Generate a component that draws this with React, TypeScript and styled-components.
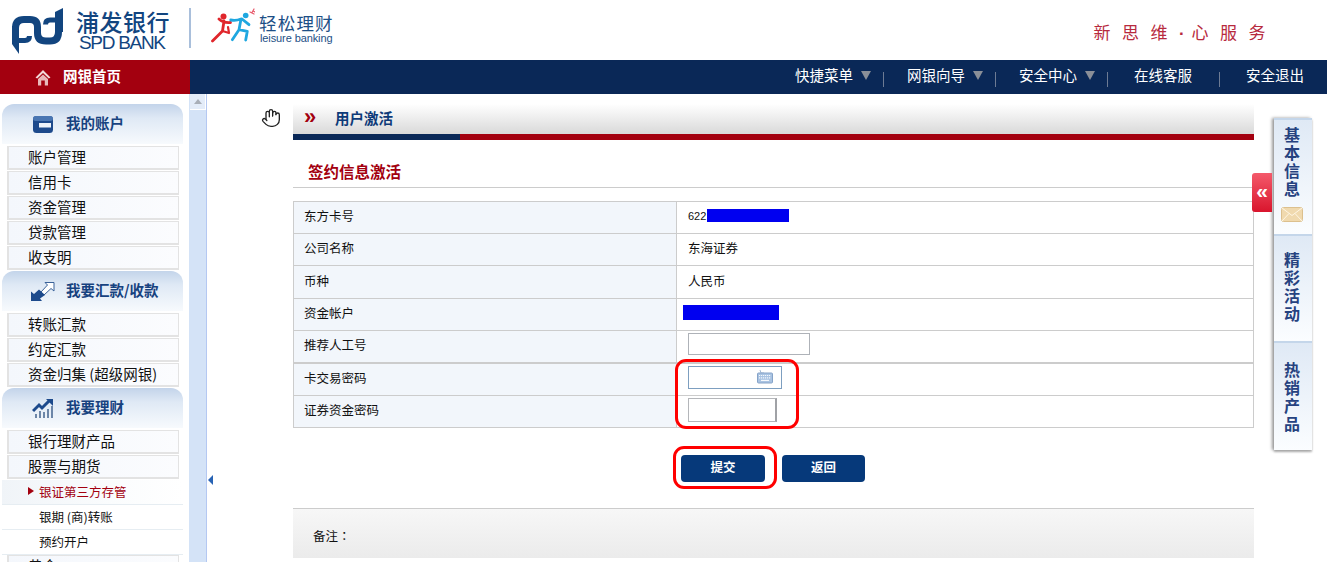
import React from 'react';
import styled, { createGlobalStyle } from 'styled-components';
import { Hand } from 'lucide-react';

const FONT = '"Noto Sans CJK SC", "Liberation Sans", sans-serif';

const GlobalStyle = createGlobalStyle`
  html, body {
    margin: 0;
    padding: 0;
    height: 562px;
    overflow: hidden;
    background: #fff;
    font-family: ${FONT};
  }
  * { box-sizing: border-box; }
`;

const Page = styled.div`
  width: 1327px;
  height: 562px;
  overflow: hidden;
  display: flex;
  flex-direction: column;
`;

/* top banner */
const Banner = styled.header`
  height: 60px;
  flex: none;
  display: flex;
  align-items: flex-start;
  padding: 8px 61px 0 11px;
`;

const BankName = styled.div`
  margin-left: 13px;
  width: 100px;
  display: flex;
  flex-direction: column;
  color: #12457f;
`;

const BankCn = styled.div`
  font-size: 23px;
  line-height: 26px;
  font-weight: 500;
  letter-spacing: 0.5px;
`;

const BankEn = styled.div`
  font-family: "Liberation Sans", sans-serif;
  font-size: 19px;
  line-height: 17px;
  letter-spacing: -1.3px;
  margin-left: 3px;
`;

const Divider = styled.div`
  width: 2px;
  height: 40px;
  margin: 0 20px 0 13px;
  background: #a9bfdb;
`;

const Leisure = styled.div`
  margin: 5px 0 0 4px;
  display: flex;
  flex-direction: column;
  color: #1d4f86;
`;

const LeisureCn = styled.div`
  font-size: 17.5px;
  line-height: 20px;
  letter-spacing: 1.2px;
`;

const LeisureEn = styled.div`
  font-family: "Liberation Sans", sans-serif;
  font-size: 11px;
  line-height: 11px;
  margin-left: 1px;
  letter-spacing: -0.1px;
`;

const Slogan = styled.div`
  margin: 12px -11px 0 auto;
  font-size: 17px;
  line-height: 24px;
  letter-spacing: 11.5px;
  color: #b72a3e;
  white-space: nowrap;
`;

const SloganDot = styled.span`
  font-family: "Liberation Sans", sans-serif;
  font-weight: 700;
  letter-spacing: 6.8px;
`;

/* nav bar */
const NavBar = styled.nav`
  height: 34px;
  flex: none;
  display: flex;
  background: #0a2857;
`;

const HomeTab = styled.div`
  width: 190px;
  background: #a3000f;
  display: flex;
  align-items: center;
  padding-left: 35px;
  gap: 12px;
  color: #fff;
  font-size: 14.5px;
  font-weight: 700;
`;

const HomeLabel = styled.span`
  padding-bottom: 4px;
`;

const NavLinks = styled.div`
  flex: 1;
  display: flex;
  align-items: center;
  justify-content: flex-end;
  padding-right: 23px;
`;

const NavLink = styled.span`
  color: #fff;
  font-size: 14.5px;
  line-height: 30px;
  padding-bottom: 4px;
  white-space: nowrap;
`;

const NavArrow = styled.span`
  width: 0;
  height: 0;
  margin: 0 12px 4px 8px;
  border-left: 5px solid transparent;
  border-right: 5px solid transparent;
  border-top: 9px solid #8a8f98;
`;

const NavSep = styled.span<{ $gap: number; $after: number }>`
  width: 1px;
  height: 15px;
  margin: 4px ${({ $after }) => $after}px 0 ${({ $gap }) => $gap}px;
  background: #6d7b94;
`;

/* body */
const Body = styled.div`
  flex: 1;
  display: flex;
  min-height: 0;
`;

const Sidebar = styled.aside`
  width: 189px;
  flex: none;
  padding: 10px 0 0 2px;
  overflow: hidden;
`;

const GroupHead = styled.div`
  width: 181px;
  height: 40px;
  margin-bottom: 2px;
  border-radius: 12px 12px 0 0;
  background: linear-gradient(#c3d4ea 0%, #dfe9f5 35%, #f7fafd 100%);
  display: flex;
  align-items: center;
  color: #17427f;
  font-size: 14.5px;
  font-weight: 700;
  white-space: nowrap;
`;

const GroupIcon = styled.span`
  width: 64px;
  flex: none;
  display: flex;
  justify-content: center;
  padding-left: 18px;
`;

const GroupLabel = styled.span`
  padding-bottom: 4px;
`;

const MenuItem = styled.div`
  width: 172px;
  height: 24px;
  margin: 0 0 1px 5px;
  padding-left: 19px;
  border: 1px solid #e3e3e3;
  border-width: 1px 1px 2px 2px;
  background: linear-gradient(90deg, #f4f7fc, #fbfcfe);
  color: #111;
  font-size: 14.5px;
  line-height: 20px;
  white-space: nowrap;
`;

const SubItem = styled.div<{ $active?: boolean }>`
  width: 181px;
  height: 25px;
  padding: 0 0 2px ${({ $active }) => ($active ? 26 : 37)}px;
  display: flex;
  align-items: center;
  gap: 5px;
  border-bottom: 1px solid #e6edf2;
  background: ${({ $active }) =>
    $active ? 'linear-gradient(90deg, #f0f4f8, #fafcfd 60%, #fff)' : '#fff'};
  color: ${({ $active }) => ($active ? '#a3000f' : '#111')};
  font-size: 12.5px;
  white-space: nowrap;
`;

const ActiveMark = styled.span`
  width: 0;
  height: 0;
  border-top: 4px solid transparent;
  border-bottom: 4px solid transparent;
  border-left: 6px solid #a3000f;
`;

const Strip = styled.div`
  position: relative;
  width: 18px;
  flex: none;
  background: #d4e3f7;
  border-right: 1px solid #b4c8f2;
  border-left: 1px solid #d4e3f7;
`;

const ScrollUp = styled.div`
  height: 16px;
  background: #e3ecf9;
  border-bottom: 1px solid #fff;
  border-right: 1px solid #fff;
  display: flex;
  align-items: center;
  justify-content: center;
  &::after {
    content: '';
    border-left: 4px solid transparent;
    border-right: 4px solid transparent;
    border-bottom: 5px solid #a9afb8;
  }
`;

const CollapseMark = styled.span`
  position: absolute;
  left: 18px;
  top: 381px;
  border-top: 5px solid transparent;
  border-bottom: 5px solid transparent;
  border-right: 5px solid #2863b4;
`;

const HandCol = styled.div`
  width: 86px;
  flex: none;
  padding: 14px 0 0 54px;
`;

const Content = styled.main`
  position: relative;
  width: 961px;
  flex: none;
  padding-top: 10px;
`;

const TitleBar = styled.div`
  height: 30px;
  padding: 0 0 4px 11px;
  display: flex;
  align-items: center;
  background: linear-gradient(#fff, #d9d9d9);
  color: #0d3a78;
  font-size: 14.5px;
  font-weight: 700;
`;

const Chevrons = styled.span`
  width: 31px;
  color: #a3000f;
  font-family: "Liberation Sans", sans-serif;
  font-size: 22px;
  font-weight: 700;
  line-height: 20px;
`;

const TitleRule = styled.div`
  height: 6px;
  background: linear-gradient(90deg, #0a2857 167px, #a3000f 167px);
`;

const SectionTitle = styled.h2`
  height: 48px;
  margin: 0 0 13px;
  padding: 19px 0 0 15px;
  border-bottom: 1px solid #ccc;
  color: #a3000f;
  font-size: 15.5px;
  line-height: 24px;
  font-weight: 700;
`;

const InfoTable = styled.table`
  width: 100%;
  border-collapse: collapse;
  border: 1px solid #ccc;
  font-size: 12.5px;
  color: #111;
`;

const Row = styled.tr<{ $height: number; $heavy?: boolean }>`
  height: ${({ $height }) => $height}px;
  border-bottom: ${({ $heavy }) => ($heavy ? 2 : 1)}px solid #ccc;
`;

const Label = styled.td`
  width: 383px;
  padding: 0 0 4px 10px;
  background: #f2f6fb;
  border-right: 1px solid #ccc;
`;

const Value = styled.td`
  padding: 0 0 4px 11px;
`;

const CellLine = styled.div`
  display: flex;
  align-items: center;
`;

const CardNo = styled.span`
  font-family: "Liberation Sans", sans-serif;
  font-size: 11px;
`;

const Redact = styled.span<{ $width: number; $height: number; $shift?: number }>`
  display: inline-block;
  width: ${({ $width }) => $width}px;
  height: ${({ $height }) => $height}px;
  margin-left: ${({ $shift }) => $shift ?? 0}px;
  background: #0000f0;
`;

const TextBox = styled.div<{ $width: number; $height: number }>`
  width: ${({ $width }) => $width}px;
  height: ${({ $height }) => $height}px;
  border: 1px solid #aeb2b8;
`;

const KeyBox = styled.div`
  width: 94px;
  height: 23px;
  border: 1px solid #7d9fc0;
  display: flex;
  align-items: center;
  justify-content: flex-end;
  padding-right: 8px;
`;

const SecretBox = styled.div`
  width: 89px;
  height: 24px;
  border: 1px solid #b4b6ba;
  border-right-width: 2px;
  border-right-color: #a0a2a6;
`;

const Actions = styled.div`
  margin: 27px 0 0 388px;
  display: flex;
  gap: 17px;
`;

const ActionButton = styled.button<{ $width: number }>`
  width: ${({ $width }) => $width}px;
  height: 27px;
  padding: 0 0 5px;
  border: none;
  border-radius: 4px;
  background: #06397a;
  color: #fff;
  font-family: ${FONT};
  font-size: 12.5px;
  font-weight: 700;
`;

const Notes = styled.div`
  margin-top: 26px;
  height: 50px;
  padding: 4px 0 0 20px;
  display: flex;
  align-items: center;
  border-top: 1px solid #ccc;
  background: linear-gradient(#f7f7f7, #ebebeb);
  font-family: "Noto Sans CJK TC", "Liberation Sans", sans-serif;
  font-size: 12.5px;
  color: #111;
`;

const Callout = styled.div<{ $x: number; $y: number; $w: number; $h: number }>`
  position: absolute;
  left: ${({ $x }) => $x}px;
  top: ${({ $y }) => $y}px;
  width: ${({ $w }) => $w}px;
  height: ${({ $h }) => $h}px;
  border: 3px solid #f00;
  border-radius: 11px;
  pointer-events: none;
`;

/* right rail */
const Rail = styled.div`
  flex: 1;
  display: flex;
  align-items: flex-start;
`;

const RailHandle = styled.div`
  width: 20px;
  height: 39px;
  margin: 79px 0 0 -2px;
  position: relative;
  border-radius: 3px 0 0 3px;
  background: linear-gradient(#f45a6b, #d9152d);
  color: #fff;
  font-family: "Liberation Sans", sans-serif;
  font-size: 21px;
  font-weight: 700;
  line-height: 36px;
  text-align: center;
`;

const RailTabs = styled.div`
  width: 38px;
  margin: 24px 0 0 2px;
  display: flex;
  flex-direction: column;
  box-shadow: -2px 0 3px #9a9a9a, 0 2px 2px #b5b5b5;
`;

const RailTab = styled.div<{ $height: number; $top: number }>`
  height: ${({ $height }) => $height}px;
  padding: ${({ $top }) => $top}px 2px 0 0;
  display: flex;
  flex-direction: column;
  align-items: center;
  gap: 8px;
  border-top: 2px solid #c4d6ea;
  background: linear-gradient(#dfe9f5, #fbfdff);
`;

const RailLabel = styled.span`
  writing-mode: vertical-rl;
  text-orientation: upright;
  color: #26427f;
  font-size: 16px;
  font-weight: 700;
  line-height: 18px;
  letter-spacing: 2px;
`;

const SpdLogo = () => (
  <svg width="52" height="46" viewBox="0 0 52 46" fill="none" stroke="#12457f" strokeWidth="7">
    <path d="M1 18 V36 L8 46 V18 Z" fill="#12457f" stroke="none" />
    <path d="M4.5 20 Q4.5 11.5 13 11.5 H19 Q26.5 11.5 26.5 19 V25 Q26.5 33 35 33 H39 Q47.5 33 47.5 24" />
    <path d="M44 4 L52 0 V24 H44 Z" fill="#12457f" stroke="none" />
    <path d="M8 32.5 H14 Q18.5 32.5 18.5 28" strokeWidth="5" />
    <path d="M45 12 H39 Q34.5 12 34.5 16.5" strokeWidth="5" />
  </svg>
);

const Runners = () => (
  <svg width="44" height="36" viewBox="0 0 44 36" fill="none" strokeLinecap="round" strokeLinejoin="round">
    <circle cx="12.5" cy="8.5" r="3" fill="#e0262c" />
    <path d="M8 11 Q12 15 19.5 14.5 M13 13 L11.5 23 L1.5 33" stroke="#e0262c" strokeWidth="2.8" />
    <path d="M11.5 23 L18 25 L17 19" stroke="#e0262c" strokeWidth="2.2" />
    <circle cx="34.7" cy="7.5" r="2.8" fill="#1ea7e0" />
    <path d="M19.7 12 Q25 13 30 11 L28 21.7 L21.3 31.7 M28 21.7 L36.3 23.3 L34.7 32 M31 11 L38 16.7" stroke="#1ea7e0" strokeWidth="2.8" />
    <path d="M43 1 L41 4.5 M39 4 L43 6 M42 3 L44 4" stroke="#e8596b" strokeWidth="1.2" />
  </svg>
);

const HomeIcon = () => (
  <svg width="16" height="17" viewBox="0 0 16 17">
    <path d="M8 1 L15.5 8.5 L13.8 9.6 L8 4 L2.2 9.6 L.5 8.5 Z" fill="#f3d9d9" />
    <path d="M3 10 L8 5.4 L13 10 V16.5 H9.8 V11.5 H6.2 V16.5 H3 Z" fill="#e9b9bb" />
  </svg>
);

const CardIcon = () => (
  <svg width="20" height="17" viewBox="0 0 20 17">
    <rect x="0" y="0" width="20" height="17" rx="3.5" fill="#1d4a8c" />
    <rect x="0" y="0" width="20" height="5" rx="2.5" fill="#4a76b2" />
    <rect x="6" y="7" width="12" height="4.5" fill="#eef3fa" />
  </svg>
);

const ArrowsIcon = () => (
  <svg width="24" height="19" viewBox="0 0 24 19">
    <path d="M14 .5 H23 V9 L20 6.5 L13 13 L10 10 L16.5 3 Z" fill="#fff" stroke="#3a6299" strokeWidth="1" />
    <path d="M0 19 V9.5 L3 12 L8 7.5 L14 13 L9 16.5 L11 19 Z" fill="#1d4a8c" />
  </svg>
);

const ChartIcon = () => (
  <svg width="22" height="20" viewBox="0 0 22 20">
    <path d="M1 13 L7 7 L10 10 L17 3" fill="none" stroke="#1d4a8c" strokeWidth="3" />
    <path d="M14 1 H21 V8 Z" fill="#1d4a8c" />
    <path d="M3 20 V16 H5 V20 Z M7 20 V13 H9 V20 Z M11 20 V14 H13 V20 Z M15 20 V11 H17 V20 Z M19 20 V8 H21 V20 Z" fill="#6c86a8" />
  </svg>
);

const KeyboardIcon = () => (
  <svg width="16" height="14" viewBox="0 0 16 14">
    <path d="M3 0 L4 3 H7" fill="none" stroke="#8aa6c8" strokeWidth=".8" />
    <rect x="0.5" y="3" width="15" height="10" rx="1" fill="#a9c3e2" stroke="#86a3c8" />
    <path d="M2 5.5 H14 M2 7.8 H14" stroke="#f4f8fd" strokeWidth="1.2" strokeDasharray="1.2 .8" />
    <path d="M4 10.4 H12" stroke="#f4f8fd" strokeWidth="1.2" />
  </svg>
);

const MailIcon = () => (
  <svg width="22" height="15" viewBox="0 0 22 15">
    <rect x="0.5" y="0.5" width="21" height="14" rx="2" fill="#f0d9ae" stroke="#dcc08e" />
    <path d="M1 1 L11 8.5 L21 1 M1 14 L8 6.5 M21 14 L14 6.5" fill="none" stroke="#fff6e4" strokeWidth="1" />
  </svg>
);

const App: React.FC = () => {
  const navItems = [
    { label: '快捷菜单', menu: true, after: 23 },
    { label: '网银向导', menu: true, after: 23 },
    { label: '安全中心', menu: true, after: 26 },
    { label: '在线客服', menu: false, after: 26 },
  ];

  return (
    <Page>
      <GlobalStyle />
      <Banner>
        <SpdLogo />
        <BankName>
          <BankCn>浦发银行</BankCn>
          <BankEn>SPD BANK</BankEn>
        </BankName>
        <Divider />
        <Runners />
        <Leisure>
          <LeisureCn>轻松理财</LeisureCn>
          <LeisureEn>leisure banking</LeisureEn>
        </Leisure>
        <Slogan>新思维<SloganDot>·</SloganDot>心服务</Slogan>
      </Banner>

      <NavBar>
        <HomeTab>
          <HomeIcon />
          <HomeLabel>网银首页</HomeLabel>
        </HomeTab>
        <NavLinks>
          {navItems.map((item) => (
            <React.Fragment key={item.label}>
              <NavLink>{item.label}</NavLink>
              {item.menu && <NavArrow />}
              <NavSep $gap={item.menu ? 0 : 27} $after={item.after} />
            </React.Fragment>
          ))}
          <NavLink>安全退出</NavLink>
        </NavLinks>
      </NavBar>

      <Body>
        <Sidebar>
          <GroupHead>
            <GroupIcon><CardIcon /></GroupIcon>
            <GroupLabel>我的账户</GroupLabel>
          </GroupHead>
          <MenuItem>账户管理</MenuItem>
          <MenuItem>信用卡</MenuItem>
          <MenuItem>资金管理</MenuItem>
          <MenuItem>贷款管理</MenuItem>
          <MenuItem>收支明</MenuItem>
          <GroupHead>
            <GroupIcon><ArrowsIcon /></GroupIcon>
            <GroupLabel>我要汇款/收款</GroupLabel>
          </GroupHead>
          <MenuItem>转账汇款</MenuItem>
          <MenuItem>约定汇款</MenuItem>
          <MenuItem>资金归集 (超级网银)</MenuItem>
          <GroupHead>
            <GroupIcon><ChartIcon /></GroupIcon>
            <GroupLabel>我要理财</GroupLabel>
          </GroupHead>
          <MenuItem>银行理财产品</MenuItem>
          <MenuItem>股票与期货</MenuItem>
          <SubItem $active>
            <ActiveMark />
            银证第三方存管
          </SubItem>
          <SubItem>银期 (商)转账</SubItem>
          <SubItem>预约开户</SubItem>
          <MenuItem>黄金</MenuItem>
        </Sidebar>

        <Strip>
          <ScrollUp />
          <CollapseMark />
        </Strip>

        <HandCol>
          <Hand size={20} color="#222" fill="#fff" strokeWidth={1.6} />
        </HandCol>

        <Content>
          <TitleBar>
            <Chevrons>»</Chevrons>
            用户激活
          </TitleBar>
          <TitleRule />
          <SectionTitle>签约信息激活</SectionTitle>
          <InfoTable>
            <tbody>
              <Row $height={32}>
                <Label>东方卡号</Label>
                <Value>
                  <CellLine>
                    <CardNo>622</CardNo>
                    <Redact $width={82} $height={13} $shift={1} />
                  </CellLine>
                </Value>
              </Row>
              <Row $height={32}>
                <Label>公司名称</Label>
                <Value>东海证券</Value>
              </Row>
              <Row $height={33}>
                <Label>币种</Label>
                <Value>人民币</Value>
              </Row>
              <Row $height={32}>
                <Label>资金帐户</Label>
                <Value>
                  <CellLine>
                    <Redact $width={96} $height={15} $shift={-5} />
                  </CellLine>
                </Value>
              </Row>
              <Row $height={32} $heavy>
                <Label>推荐人工号</Label>
                <Value>
                  <TextBox $width={122} $height={22} />
                </Value>
              </Row>
              <Row $height={33}>
                <Label>卡交易密码</Label>
                <Value>
                  <KeyBox><KeyboardIcon /></KeyBox>
                </Value>
              </Row>
              <Row $height={32}>
                <Label>证券资金密码</Label>
                <Value>
                  <SecretBox />
                </Value>
              </Row>
            </tbody>
          </InfoTable>
          <Actions>
            <ActionButton $width={84}>提交</ActionButton>
            <ActionButton $width={83}>返回</ActionButton>
          </Actions>
          <Notes>备注：</Notes>
          <Callout $x={382} $y={265} $w={124} $h={70} />
          <Callout $x={380} $y={352} $w={104} $h={43} />
        </Content>

        <Rail>
          <RailHandle>«</RailHandle>
          <RailTabs>
            <RailTab $height={116} $top={7}>
              <RailLabel>基本信息</RailLabel>
              <MailIcon />
            </RailTab>
            <RailTab $height={107} $top={16}>
              <RailLabel>精彩活动</RailLabel>
            </RailTab>
            <RailTab $height={109} $top={19}>
              <RailLabel>热销产品</RailLabel>
            </RailTab>
          </RailTabs>
        </Rail>
      </Body>
    </Page>
  );
};

export default App;
